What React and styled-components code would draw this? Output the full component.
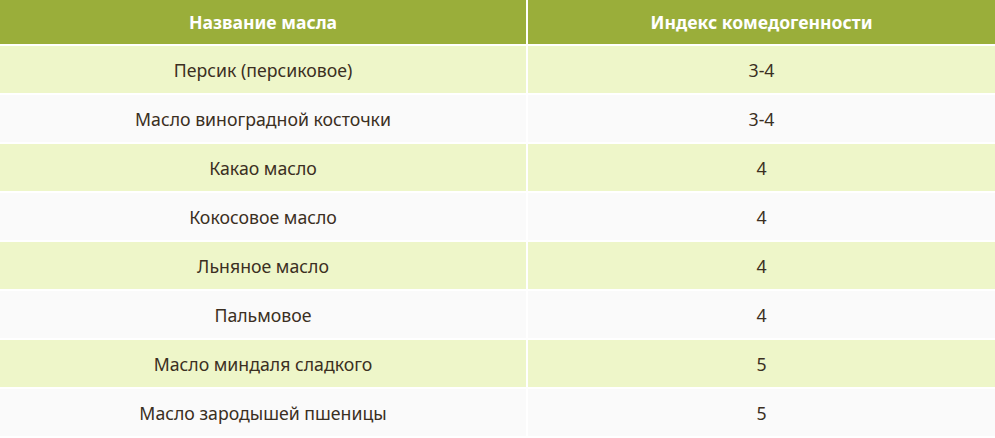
import React from "react";
import styled, { createGlobalStyle } from "styled-components";

const GlobalStyle = createGlobalStyle`
  body {
    margin: 0;
    background: #ffffff;
    font-family: "Noto Sans", "Open Sans", sans-serif;
  }
`;

const Table = styled.div`
  display: grid;
  grid-template-columns: 526px 1fr;
  gap: 2px;
  background: #ffffff;
  width: 995px;
`;

const HeadCell = styled.div`
  height: 44px;
  display: flex;
  align-items: center;
  justify-content: center;
  background: #9aae3a;
  color: #ffffff;
  font-weight: bold;
  font-size: 17.6px;
`;

const Cell = styled.div`
  height: 47px;
  display: flex;
  align-items: center;
  justify-content: center;
  background: ${(p) => (p.$alt ? "#eef6c9" : "#fafafa")};
  color: #3b2f22;
  font-size: 17.7px;
`;

const oils = [
  ["Персик (персиковое)", "3-4"],
  ["Масло виноградной косточки", "3-4"],
  ["Какао масло", "4"],
  ["Кокосовое масло", "4"],
  ["Льняное масло", "4"],
  ["Пальмовое", "4"],
  ["Масло миндаля сладкого", "5"],
  ["Масло зародышей пшеницы", "5"],
];

export default function App() {
  return (
    <>
      <GlobalStyle />
      <Table>
        <HeadCell>Название масла</HeadCell>
        <HeadCell>Индекс комедогенности</HeadCell>
        {oils.map(([name, index], i) => (
          <React.Fragment key={name}>
            <Cell $alt={i % 2 === 0}>{name}</Cell>
            <Cell $alt={i % 2 === 0}>{index}</Cell>
          </React.Fragment>
        ))}
      </Table>
    </>
  );
}
